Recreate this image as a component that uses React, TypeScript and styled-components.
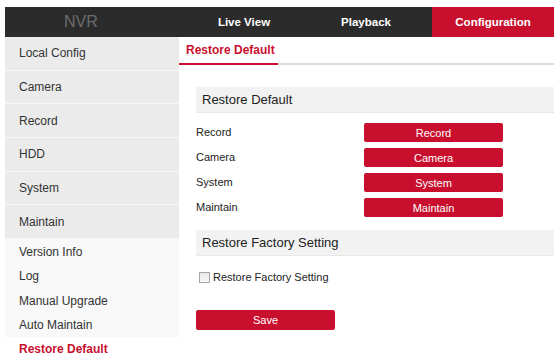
import React from "react";
import styled, { createGlobalStyle } from "styled-components";

const Global = createGlobalStyle`
  html, body { margin: 0; padding: 0; background: #fff; }
  body { font-family: "Liberation Sans", Arial, sans-serif; color: #333; }
`;

const RED = "#c8102e";

const Page = styled.div`
  width: 549px;
  padding: 7px 4px 0 5px;
`;

const TopBar = styled.div`
  height: 30px;
  background: #2b2b2b;
  display: flex;
  align-items: stretch;
`;

const Logo = styled.div`
  width: 178px;
  box-sizing: border-box;
  padding-left: 59px;
  display: flex;
  align-items: center;
  font-size: 16px;
  color: #6b6b6b;
`;

const NavItem = styled.div<{ $active?: boolean }>`
  width: 122px;
  display: flex;
  align-items: center;
  justify-content: center;
  font-size: 11.5px;
  font-weight: bold;
  color: #fff;
  background: ${(p) => (p.$active ? RED : "transparent")};
  margin-left: ${(p) => (p.$active ? "auto" : "0")};
`;

const Main = styled.div`
  display: grid;
  grid-template-columns: 174px 1fr;
`;

const Sidebar = styled.div`
  display: flex;
  flex-direction: column;
`;

const MenuItem = styled.div`
  height: 33.67px;
  box-sizing: border-box;
  background: #ebebeb;
  border-bottom: 1px solid #f7f7f7;
  padding-left: 14px;
  display: flex;
  align-items: center;
  font-size: 12px;
  color: #333;
`;

const SubList = styled.div`
  background: #f8f8f8;
  display: flex;
  flex-direction: column;
  padding-top: 1px;
`;

const SubItem = styled.div<{ $active?: boolean }>`
  height: 24.3px;
  padding-left: 14px;
  display: flex;
  align-items: center;
  font-size: 12px;
  color: ${(p) => (p.$active ? RED : "#333")};
  font-weight: ${(p) => (p.$active ? "bold" : "normal")};
  background: ${(p) => (p.$active ? "#fff" : "transparent")};
`;

const Content = styled.div`
  display: flex;
  flex-direction: column;
`;

const TabBar = styled.div`
  height: 26px;
  display: flex;
  align-items: stretch;
  border-bottom: 2px solid #dcdcdc;
`;

const Tab = styled.div`
  width: 99px;
  box-sizing: border-box;
  padding-left: 7px;
  display: flex;
  align-items: center;
  font-size: 12px;
  font-weight: bold;
  color: ${RED};
  border-bottom: 2px solid ${RED};
  margin-bottom: -2px;
`;

const Body = styled.div`
  padding-left: 17px;
  display: flex;
  flex-direction: column;
`;

const SectionHeader = styled.div<{ $top: number }>`
  margin-top: ${(p) => p.$top}px;
  height: 25px;
  background: #f2f2f2;
  border-bottom: 1px solid #e8e8e8;
  padding-left: 6px;
  display: flex;
  align-items: center;
  font-size: 13px;
  color: #222;
`;

const Rows = styled.div`
  margin-top: 10px;
  display: flex;
  flex-direction: column;
  gap: 6px;
`;

const Row = styled.div`
  height: 19px;
  display: grid;
  grid-template-columns: 168px 139px;
  align-items: center;
`;

const Label = styled.div`
  font-size: 11px;
  color: #222;
  margin-top: -2px;
`;

const RedButton = styled.button<{ $h?: number }>`
  width: 139px;
  height: ${(p) => p.$h ?? 19}px;
  border: none;
  border-radius: 2px;
  background: ${RED};
  color: #fff;
  font-family: "Liberation Sans", Arial, sans-serif;
  font-size: 11px;
  padding: 0;
  display: flex;
  align-items: center;
  justify-content: center;
`;

const CheckRow = styled.label`
  margin-top: 15px;
  padding-left: 3px;
  display: flex;
  align-items: center;
  gap: 3px;
  font-size: 11px;
  color: #222;
`;

const Box = styled.span`
  width: 9px;
  height: 9px;
  border: 1px solid #a6a6a6;
  background: linear-gradient(#e8e8e8, #f8f8f8);
  display: inline-block;
`;

const SaveWrap = styled.div`
  margin-top: 27px;
`;

export default function App() {
  const menu = ["Local Config", "Camera", "Record", "HDD", "System", "Maintain"];
  const sub = ["Version Info", "Log", "Manual Upgrade", "Auto Maintain"];
  const rows = ["Record", "Camera", "System", "Maintain"];
  return (
    <>
      <Global />
      <Page>
        <TopBar>
          <Logo>NVR</Logo>
          <NavItem>Live View</NavItem>
          <NavItem>Playback</NavItem>
          <NavItem $active>Configuration</NavItem>
        </TopBar>
        <Main>
          <Sidebar>
            {menu.map((m) => (
              <MenuItem key={m}>{m}</MenuItem>
            ))}
            <SubList>
              {sub.map((s) => (
                <SubItem key={s}>{s}</SubItem>
              ))}
            </SubList>
            <SubItem $active>Restore Default</SubItem>
          </Sidebar>
          <Content>
            <TabBar>
              <Tab>Restore Default</Tab>
            </TabBar>
            <Body>
              <SectionHeader $top={22}>Restore Default</SectionHeader>
              <Rows>
                {rows.map((r) => (
                  <Row key={r}>
                    <Label>{r}</Label>
                    <RedButton>{r}</RedButton>
                  </Row>
                ))}
              </Rows>
              <SectionHeader $top={13}>Restore Factory Setting</SectionHeader>
              <CheckRow>
                <Box />
                Restore Factory Setting
              </CheckRow>
              <SaveWrap>
                <RedButton $h={20}>Save</RedButton>
              </SaveWrap>
            </Body>
          </Content>
        </Main>
      </Page>
    </>
  );
}
